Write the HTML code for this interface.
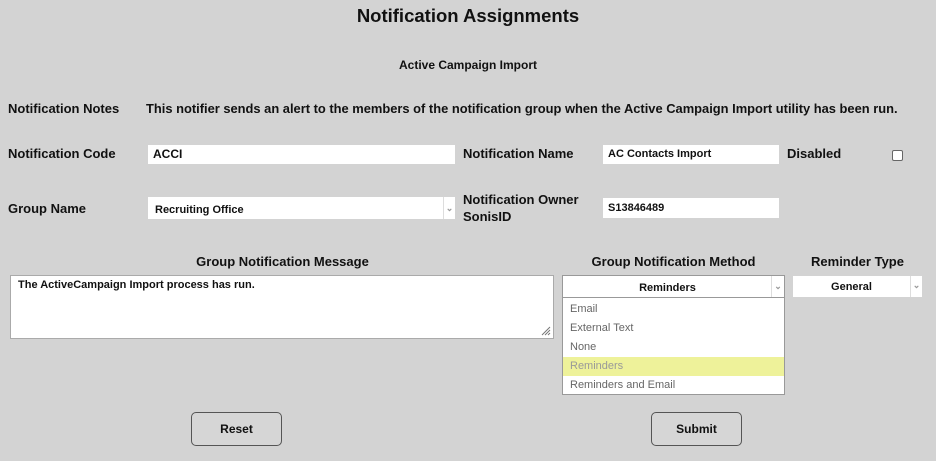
<!DOCTYPE html><html><head><style>
body{margin:0;width:936px;height:461px;background:#d3d3d3;font-family:"Liberation Sans",sans-serif;position:relative;overflow:hidden;color:#111}
.a{position:absolute;white-space:nowrap}
.b{font-weight:bold;font-size:13px}
.in{position:absolute;background:#fff;box-sizing:border-box;font-size:12px;font-weight:bold;padding-left:5px}
.arr{position:absolute;right:0;top:0;bottom:0;width:11px;border-left:1px solid #ddd;color:#999;font-size:9px;text-align:center}
.it{height:19px;line-height:19px;padding-left:7px;font-size:11px;color:#666}
.btn{position:absolute;width:91px;height:34px;border:1px solid #555;border-radius:5px;background:#d6d6d6;font-size:12px;font-weight:bold;text-align:center;line-height:32px;box-sizing:border-box}
</style></head><body>
<div class="a" style="left:0;width:936px;text-align:center;top:5px;font-size:18.5px;font-weight:bold">Notification Assignments</div>
<div class="a b" style="left:0;width:936px;text-align:center;top:58px;font-size:12px">Active Campaign Import</div>
<div class="a b" style="left:8px;top:101px">Notification Notes</div>
<div class="a b" style="left:146px;top:101px;font-size:12.9px">This notifier sends an alert to the members of the notification group when the Active Campaign Import utility has been run.</div>
<div class="a b" style="left:8px;top:146px">Notification Code</div>
<div class="in" style="left:148px;top:145px;width:307px;height:19px;line-height:19px">ACCI</div>
<div class="a b" style="left:463px;top:146px">Notification Name</div>
<div class="in" style="left:603px;top:145px;width:176px;height:19px;line-height:19px;font-size:11px">AC Contacts Import</div>
<div class="a b" style="left:787px;top:146px">Disabled</div>
<div class="a" style="left:892px;top:150px;width:9px;height:9px;border:1px solid #666;background:#fff;border-radius:2px"></div>
<div class="a b" style="left:8px;top:201px">Group Name</div>
<div class="in" style="left:148px;top:197px;width:307px;height:22px;line-height:26px;padding-left:7px;font-size:11px">Recruiting Office<div class="arr" style="line-height:22px">&#8964;</div></div>
<div class="a b" style="left:463px;top:191px;line-height:17px">Notification Owner<br>SonisID</div>
<div class="in" style="left:603px;top:198px;width:176px;height:20px;line-height:20px;font-size:11px">S13846489</div>
<div class="a b" style="left:10px;width:545px;text-align:center;top:254px">Group Notification Message</div>
<div class="in" style="left:10px;top:275px;width:544px;height:64px;border:1px solid #aaa;padding:3px 7px;font-size:11px">The ActiveCampaign Import process has run.
<svg style="position:absolute;right:2px;bottom:2px" width="10" height="10"><path d="M9 1L1 9M9 4L4 9M9 7L7 9" stroke="#777"/></svg></div>
<div class="a b" style="left:562px;width:223px;text-align:center;top:254px">Group Notification Method</div>
<div class="in" style="left:562px;top:275px;width:223px;height:23px;border:1px solid #999;text-align:center;line-height:24px;font-size:11px;padding:0 12px 0 0">Reminders<div class="arr" style="line-height:20px;width:12px">&#8964;</div></div>
<div class="a" style="left:562px;top:298px;width:221px;height:96px;background:#fff;border:1px solid #999;border-top:none">
<div style="height:2px"></div>
<div class="it">Email</div><div class="it">External Text</div><div class="it">None</div><div class="it" style="background:#eef29a;color:#999">Reminders</div><div class="it">Reminders and Email</div></div>
<div class="a b" style="left:793px;width:129px;text-align:center;top:254px">Reminder Type</div>
<div class="in" style="left:793px;top:276px;width:129px;height:21px;text-align:center;line-height:23px;font-size:11px;padding:0 12px 0 0">General<div class="arr" style="line-height:19px">&#8964;</div></div>
<div class="btn" style="left:191px;top:412px">Reset</div>
<div class="btn" style="left:651px;top:412px">Submit</div>
</body></html>
